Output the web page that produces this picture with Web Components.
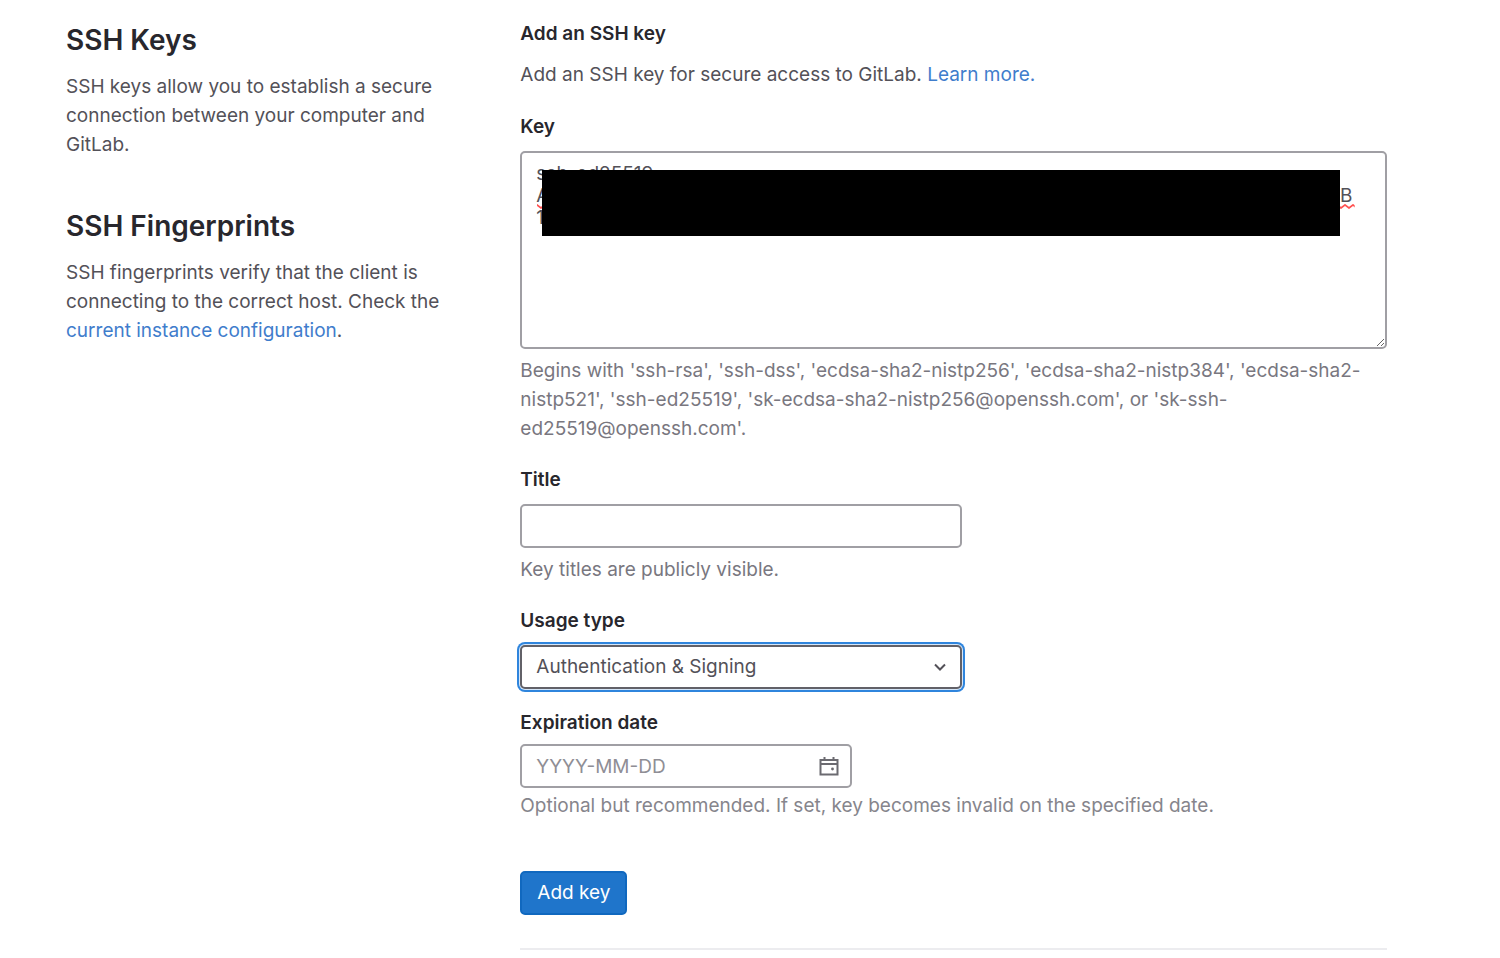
<!DOCTYPE html>
<html lang="en">
<head>
    <meta charset="UTF-8">
    <meta name="viewport" content="width=device-width, initial-scale=1.0">
    <title>SSH Keys</title>
    <style>
        :root{
            --text-color: #535158;
            --heading-color: #28272d;
            --muted-color: #79777f;
            --link-color: #3f7dcc;
            --border-color: #a09fa4;
            --text-size: 19px;
            --line: 29px;
        }
        body{
            margin: 0;
            background: #fff;
            color: var(--text-color);
            font-family: Inter, "Liberation Sans", sans-serif;
            font-size: var(--text-size);
            line-height: var(--line);
        }
        a{
            color: var(--link-color);
            text-decoration: none;
        }
    </style>
</head>
<body>
    <settings-page>
        <settings-section slot="aside" heading="SSH Keys">
            SSH keys allow you to establish a secure connection between your computer and GitLab.
        </settings-section>
        <settings-section slot="aside" heading="SSH Fingerprints">
            SSH fingerprints verify that the client is connecting to the correct host. Check the
            <a href="#configuration">current instance configuration</a>.
        </settings-section>
        <key-form>
            <span slot="title">Add an SSH key</span>
            <span slot="intro">Add an SSH key for secure access to GitLab. <a href="#learn">Learn more.</a></span>
            <key-field label="Key">Begins with 'ssh-rsa', 'ssh-dss', 'ecdsa-sha2-nistp256', 'ecdsa-sha2-nistp384', 'ecdsa-sha2-nistp521', 'ssh-ed25519', 'sk-ecdsa-sha2-nistp256@openssh.com', or 'sk-ssh-ed25519@openssh.com'.</key-field>
            <text-field label="Title">Key titles are publicly visible.</text-field>
            <select-field label="Usage type" options="Authentication &amp; Signing|Authentication|Signing" active></select-field>
            <date-field label="Expiration date">Optional but recommended. If set, key becomes invalid on the specified date.</date-field>
        </key-form>
    </settings-page>

    <template id="page">
        <style>
            :host{
                display: grid;
                grid-template-columns: 1fr 2fr;
                column-gap: 21px;
                padding: 19px 113px 0 66px;
            }
            aside{
                display: flex;
                flex-direction: column;
                gap: 49px;
                padding-top: 3px;
            }
        </style>
        <aside><slot name="aside"></slot></aside>
        <main><slot></slot></main>
    </template>

    <template id="section">
        <style>
            :host{ display: block; }
            h2{
                margin: 0 0 14px;
                color: var(--heading-color);
                font-size: 28px;
                font-weight: 600;
                line-height: 36px;
            }
            p{ margin: 0; padding-right: 44px; }
        </style>
        <h2></h2>
        <p><slot></slot></p>
    </template>

    <template id="form">
        <style>
            :host{ display: block; }
            form{
                display: flex;
                flex-direction: column;
                align-items: stretch;
                padding-bottom: 33px;
                border-bottom: 2px solid #ececef;
            }
            h3{
                margin: 0 0 12px;
                color: var(--heading-color);
                font-size: var(--text-size);
                font-weight: 600;
            }
            p{ margin: 0 0 23px; }
            .fields{
                display: flex;
                flex-direction: column;
            }
            button{
                align-self: flex-start;
                height: 44px;
                margin-top: 51px;
                padding: 0 15px;
                border: 2px solid #1068bf;
                border-radius: 5px;
                background: #1f75cb;
                color: #fff;
                font: inherit;
                line-height: 22px;
            }
        </style>
        <form>
            <h3><slot name="title"></slot></h3>
            <p><slot name="intro"></slot></p>
            <div class="fields"><slot></slot></div>
            <button type="button">Add key</button>
        </form>
    </template>
</body>
<script>
    const fieldStyle = `
        :host{
            display: block;
            margin-bottom: 22px;
        }
        label{
            display: block;
            margin-bottom: 10px;
            color: var(--heading-color);
            font-weight: 600;
        }
        input, select, textarea{
            display: block;
            box-sizing: border-box;
            width: 100%;
            height: 44px;
            margin: 0;
            padding: 0 14px;
            border: 2px solid var(--border-color);
            border-radius: 5px;
            outline: none;
            background: #fff;
            color: var(--text-color);
            font: inherit;
            line-height: 22px;
        }
        .control{
            position: relative;
            width: 51%;
        }
        .control svg{
            position: absolute;
            pointer-events: none;
        }
        .hint{
            margin-top: 7px;
            color: var(--muted-color);
        }
    `;

    class TemplateElement extends HTMLElement{
        constructor(){
            super();
            const shadow = this.attachShadow({mode:'open'});
            const templateDOM = document.getElementById(this.constructor.template);
            shadow.appendChild(templateDOM.content.cloneNode(true));
        }
    }

    class SettingsPage extends TemplateElement{
        static template = 'page';
    }

    class KeyForm extends TemplateElement{
        static template = 'form';
    }

    class SettingsSection extends TemplateElement{
        static template = 'section';
        connectedCallback(){
            this.shadowRoot.querySelector('h2').textContent = this.getAttribute('heading');
        }
    }

    // label + control + hint, subclasses supply the control
    class BaseField extends HTMLElement{
        constructor(){
            super();
            const shadow = this.attachShadow({mode:'open'});
            shadow.innerHTML = `
                <style>${fieldStyle}${this.css()}</style>
                <label for="control"></label>
                <div class="control">${this.control()}</div>
                ${this.hasHint() ? '<div class="hint"><slot></slot></div>' : ''}
            `;
            shadow.querySelector('label').textContent = this.getAttribute('label');
        }
        css(){ return ''; }
        hasHint(){ return true; }
    }

    class TextField extends BaseField{
        control(){
            return '<input id="control" type="text">';
        }
    }

    class KeyField extends BaseField{
        css(){
            return `
                .control{ width: 100%; }
                textarea{
                    height: 198px;
                    padding: 10px 14px;
                    resize: vertical;
                }
                .redacted{
                    position: absolute;
                    top: 19px;
                    left: 22px;
                    right: 47px;
                    height: 66px;
                    background: #000;
                }
                .control .squiggle{
                    top: 53px;
                    left: 17px;
                    width: calc(100% - 49px);
                    height: 5px;
                }
            `;
        }
        control(){
            return `
                <textarea id="control" spellcheck="false">${this.value()}</textarea>
                <svg class="squiggle" aria-hidden="true">
                    <defs>
                        <pattern id="wave" width="8" height="5" patternUnits="userSpaceOnUse">
                            <path d="M-1 0L0 1L4 4L8 1L9 0" fill="none" stroke="#ff5050" stroke-width="1.7"/>
                        </pattern>
                    </defs>
                    <rect width="100%" height="5" fill="url(#wave)"/>
                </svg>
                <div class="redacted"></div>
            `;
        }
        // the middle of the key is blank, only its ends show beside the bar
        value(){
            return 'ssh-ed25519\nA' + '\u00a0'.repeat(146) + 'zB\n1';
        }
    }

    class SelectField extends BaseField{
        css(){
            return `
                :host{ margin-bottom: 19px; }
                select{ appearance: none; }
                :host([active]) select{
                    border-color: #626168;
                    box-shadow: 0 0 0 1px #d5e6f8, 0 0 0 3px #2f85dd;
                }
                .control svg{ top: 14px; right: 14px; }
            `;
        }
        control(){
            const options = this.getAttribute('options').split('|')
                .map(o => `<option>${o.replace('&', '&amp;')}</option>`).join('');
            return `
                <select id="control">${options}</select>
                <svg width="16" height="16" viewBox="0 0 16 16" aria-hidden="true">
                    <path d="M3 5.5L8 10.5L13 5.5" fill="none" stroke="#535158" stroke-width="2"/>
                </svg>
            `;
        }
        hasHint(){ return false; }
    }

    class DateField extends BaseField{
        css(){
            return `
                :host{ margin-bottom: 0; }
                label{ margin-bottom: 7px; }
                .control{ width: 332px; max-width: 100%; }
                input::placeholder{ color: #8f8e95; opacity: 1; }
                .control svg{ top: 11px; right: 12px; }
                .hint{ margin-top: 3px; color: #86858c; }
            `;
        }
        control(){
            return `
                <input id="control" type="text" placeholder="YYYY-MM-DD">
                <svg width="22" height="22" viewBox="0 0 22 22" fill="none" stroke="#6b6a70" stroke-width="2" aria-hidden="true">
                    <path d="M2.5 5H19.5V19.5H2.5ZM2.5 9H19.5M6.5 2V5M15.5 2V5"/>
                    <circle cx="14.5" cy="14" r="1.4" fill="#6b6a70" stroke="none"/>
                </svg>
            `;
        }
    }

    customElements.define('settings-page', SettingsPage);
    customElements.define('settings-section', SettingsSection);
    customElements.define('key-form', KeyForm);
    customElements.define('key-field', KeyField);
    customElements.define('text-field', TextField);
    customElements.define('select-field', SelectField);
    customElements.define('date-field', DateField);
</script>
</html>
